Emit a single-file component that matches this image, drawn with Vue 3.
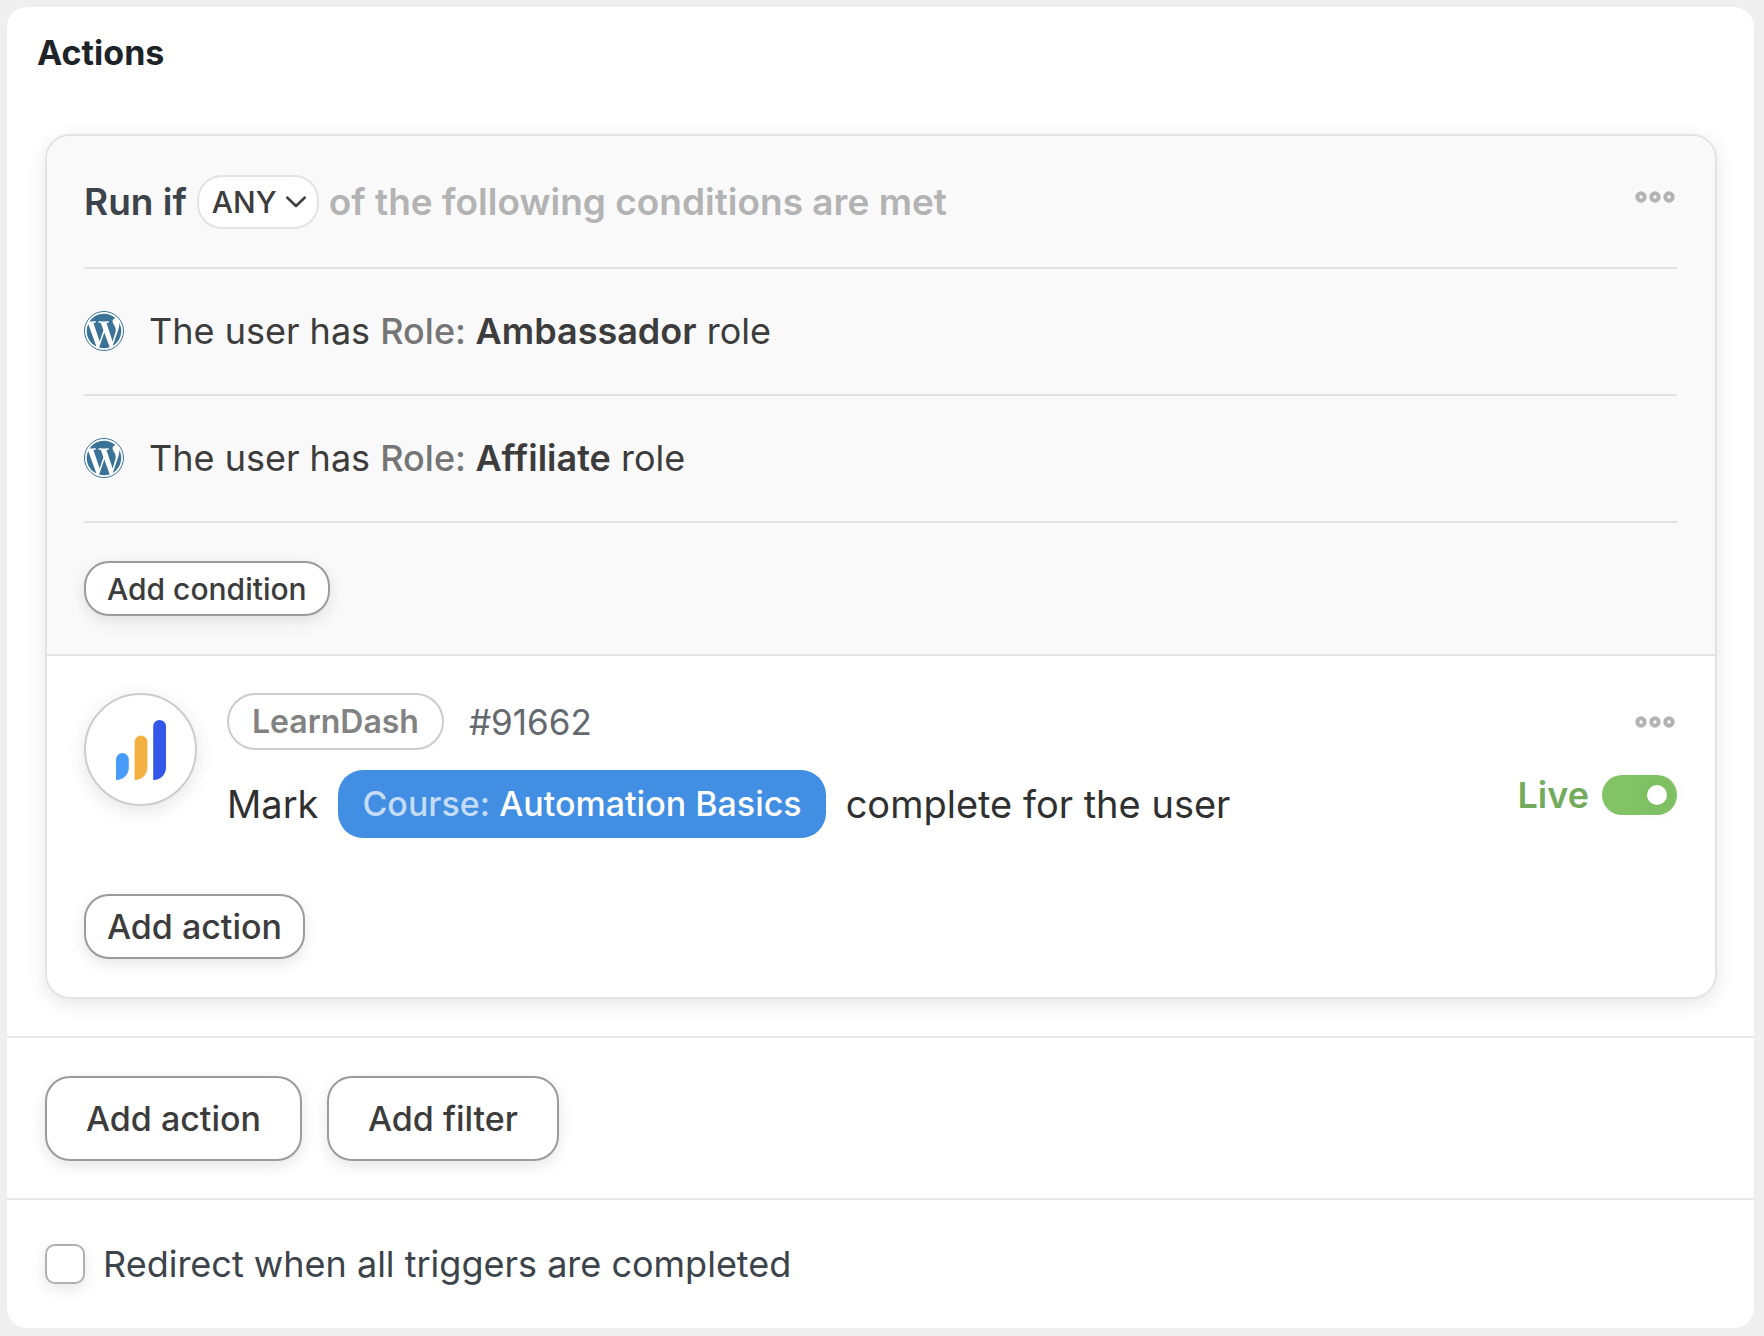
<template>
  <main class="panel">
    <h2 class="panel-title">Actions</h2>

    <section class="card">
      <!-- Conditions -->
      <div class="conditions">
        <header class="conditions-header">
          <div class="rule-text">
            <label for="match-mode" class="rule-label">Run if</label>
            <span class="select-wrapper">
              <select id="match-mode" v-model="matchMode" class="match-select">
                <option value="any">ANY</option>
                <option value="all">ALL</option>
              </select>
              <svg class="select-arrow" viewBox="0 0 20 12" width="20" height="12" fill="none" stroke="currentColor" stroke-width="2.6" stroke-linecap="round" stroke-linejoin="round"><path d="m1.3 1.6 8.7 8.4 8.7-8.4"/></svg>
            </span>
            <span class="rule-hint">of the following conditions are met</span>
          </div>
          <button type="button" class="more-btn" aria-label="Condition options">
            <svg viewBox="0 0 40 12" width="40" height="12" fill="none" stroke="currentColor" stroke-width="4"><circle cx="6" cy="6" r="3.7"/><circle cx="20" cy="6" r="3.7"/><circle cx="34" cy="6" r="3.7"/></svg>
          </button>
        </header>

        <ul class="condition-list">
          <li v-for="role in roles" :key="role" class="condition-row">
            <svg class="wp-icon" viewBox="0 0 24 24" width="40" height="40" aria-hidden="true">
              <circle cx="12" cy="12" r="11.7" fill="#fff" stroke="#3b7297" stroke-width="0.6"/>
              <path transform="translate(12 12) scale(0.96) translate(-12 -12)" fill="#3b7297" d="M21.469 6.825c.84 1.537 1.318 3.3 1.318 5.175 0 3.979-2.156 7.456-5.363 9.325l3.295-9.527c.615-1.54.82-2.771.82-3.864 0-.405-.026-.78-.07-1.11m-7.981.105c.647-.03 1.232-.105 1.232-.105.582-.075.514-.93-.067-.899 0 0-1.755.135-2.88.135-1.064 0-2.85-.15-2.85-.15-.585-.03-.661.855-.075.885 0 0 .54.061 1.125.09l1.68 4.605-2.37 7.08L5.354 6.9c.649-.03 1.234-.1 1.234-.1.585-.075.516-.93-.065-.896 0 0-1.746.138-2.874.138-.2 0-.438-.008-.69-.015C4.911 3.15 8.235 1.215 12 1.215c2.809 0 5.365 1.072 7.286 2.833-.046-.003-.091-.009-.141-.009-1.06 0-1.812.923-1.812 1.914 0 .89.513 1.643 1.06 2.531.411.72.89 1.643.89 2.977 0 .915-.354 1.994-.821 3.479l-1.075 3.585-3.9-11.61.001.014zM12 22.784c-1.059 0-2.081-.153-3.048-.437l3.237-9.406 3.315 9.087c.024.053.05.101.078.149-1.12.393-2.325.609-3.582.609M1.211 12c0-1.564.336-3.05.935-4.39L7.29 21.709C3.694 19.96 1.212 16.271 1.211 12"/>
            </svg>
            <p class="condition-text">
              The user has <span class="field-name">Role: </span><strong>{{ role }}</strong> role
            </p>
          </li>
        </ul>

        <div class="conditions-footer">
          <button type="button" class="btn btn-small">Add condition</button>
        </div>
      </div>

      <!-- Action -->
      <div class="action">
        <div class="action-row">
          <div class="avatar">
            <svg viewBox="0 0 50 60" width="50" height="60" aria-hidden="true">
              <path fill="#479bf9" d="M0 60V39.5a6.4 6.4 0 0 1 12.8 0V47.5A12.5 12.5 0 0 1 0 60z"/>
              <path fill="#f4b140" d="M18.6 60V22a6.4 6.4 0 0 1 12.8 0V47.5A12.5 12.5 0 0 1 18.6 60z"/>
              <path fill="#3358e9" d="M37.2 60V6.4a6.4 6.4 0 0 1 12.8 0V47.5A12.5 12.5 0 0 1 37.2 60z"/>
            </svg>
          </div>

          <div class="action-body">
            <div class="action-meta">
              <span class="integration">LearnDash</span>
              <span class="action-id">#91662</span>
            </div>
            <div class="sentence">
              <span>Mark</span>
              <button type="button" class="token">
                <span class="token-name">Course: </span>Automation Basics
              </button>
              <span>complete for the user</span>
            </div>
          </div>

          <div class="action-side">
            <button type="button" class="more-btn" aria-label="Action options">
              <svg viewBox="0 0 40 12" width="40" height="12" fill="none" stroke="currentColor" stroke-width="4"><circle cx="6" cy="6" r="3.7"/><circle cx="20" cy="6" r="3.7"/><circle cx="34" cy="6" r="3.7"/></svg>
            </button>
            <div class="status">
              <label for="action-live">Live</label>
              <input id="action-live" v-model="isLive" type="checkbox" role="switch" class="toggle">
            </div>
          </div>
        </div>

        <button type="button" class="btn btn-medium">Add action</button>
      </div>
    </section>

    <div class="panel-buttons">
      <button type="button" class="btn btn-large">Add action</button>
      <button type="button" class="btn btn-large">Add filter</button>
    </div>

    <div class="redirect">
      <input id="redirect" v-model="redirect" type="checkbox" class="checkbox">
      <label for="redirect">Redirect when all triggers are completed</label>
    </div>
  </main>
</template>

<script setup>
import { ref } from 'vue'

const roles = ['Ambassador', 'Affiliate']

const matchMode = ref('any')
const isLive = ref(true)
const redirect = ref(false)
</script>

<style>
body {
  background: #efefef;
}
</style>

<style scoped>
.panel {
  margin: 7px 10px 8px 7px;
  background: #fff;
  border-radius: 20px;
  color: #3c3c3c;
  font-family: Inter, "Liberation Sans", sans-serif;
  font-size: 36px;
  line-height: 44px;
}

.panel * {
  box-sizing: border-box;
}

button,
select,
input {
  margin: 0;
  font: inherit;
  color: inherit;
  cursor: pointer;
}

.panel-title {
  margin: 0;
  padding: 24px 30px 59px;
  color: #1d2327;
  font-size: 34px;
  font-weight: 700;
}

.card {
  margin: 0 37px 37px 38px;
  border: 2px solid #e3e3e3;
  border-radius: 25px;
  box-shadow: 0 5px 20px rgba(0, 0, 0, 0.1);
}

/* Conditions */
.conditions {
  padding: 0 38px 0 37px;
  background: #f9f9f9;
  border-bottom: 2px solid #e3e3e3;
  border-radius: 23px 23px 0 0;
}

.conditions-header {
  display: flex;
  align-items: flex-start;
  justify-content: space-between;
  padding: 39px 0 38px;
  border-bottom: 2px solid #e3e3e3;
}

.conditions-header .more-btn {
  margin-top: 16px;
}

.rule-text {
  display: flex;
  align-items: center;
  gap: 10px;
  font-size: 37px;
  font-weight: 600;
}

.rule-label {
  color: #3c434a;
}

.rule-hint {
  color: #b3b3b3;
}

.select-wrapper {
  position: relative;
  display: flex;
}

.match-select {
  appearance: none;
  height: 54px;
  padding: 0 40px 0 13px;
  background: #fff;
  border: 2px solid #e3e3e3;
  border-radius: 25px;
  font-size: 30px;
  font-weight: 500;
}

.select-arrow {
  position: absolute;
  top: 21px;
  right: 13px;
  pointer-events: none;
}

.more-btn {
  display: flex;
  padding: 0 2px 0 0;
  border: 0;
  background: none;
  color: #b3b3b3;
}

.condition-list {
  margin: 0;
  padding: 0;
  list-style: none;
}

.condition-row {
  display: flex;
  align-items: center;
  gap: 25px;
  padding: 40px 0 41px;
  border-bottom: 2px solid #e3e3e3;
}

.condition-text {
  margin: 0;
}

.condition-text strong {
  font-weight: 600;
}

.field-name {
  color: #757575;
  font-weight: 500;
}

.conditions-footer {
  padding: 38px 0;
}

.conditions-footer,
.panel-buttons {
  display: flex;
}

/* Buttons */
.btn {
  background: #fff;
  border: 2px solid #9b9b9b;
  border-radius: 25px;
  box-shadow: 0 5px 15px rgba(0, 0, 0, 0.1);
  font-weight: 500;
}

.btn-small {
  height: 55px;
  padding: 0 21px;
  font-size: 30px;
}

.btn-medium {
  height: 65px;
  padding: 0 21px;
  font-size: 34px;
}

.btn-large {
  height: 85px;
  padding: 0 39px;
  font-size: 34px;
}

/* Action */
.action {
  padding: 37px 38px 38px 37px;
}

.action-row {
  display: flex;
  gap: 30px;
  margin-bottom: 56px;
}

.avatar {
  display: flex;
  align-items: center;
  justify-content: center;
  flex: none;
  width: 113px;
  height: 113px;
  border: 2px solid #ccc;
  border-radius: 50%;
  box-shadow: 0 5px 20px rgba(0, 0, 0, 0.1);
}

.action-body {
  flex: 1;
}

.action-meta {
  display: flex;
  align-items: center;
  gap: 25px;
  margin-bottom: 20px;
}

.integration {
  padding: 6px 23px 5px;
  border: 2px solid #ccc;
  border-radius: 29px;
  color: #828282;
  font-size: 32px;
  font-weight: 600;
  line-height: 42px;
}

.action-id {
  color: #646970;
  font-size: 35px;
}

.sentence {
  display: flex;
  align-items: center;
  gap: 20px;
  color: #303030;
  font-size: 38px;
}

.token {
  height: 68px;
  padding: 0 24px;
  border: 0;
  border-radius: 25px;
  background: #418ee2;
  color: #fff;
  font-size: 34px;
  font-weight: 500;
}

.token-name {
  color: #c4dcf6;
}

.action-side {
  display: flex;
  flex-direction: column;
  align-items: flex-end;
  gap: 45px;
  padding-top: 23px;
}

.status {
  display: flex;
  align-items: center;
  gap: 13px;
  color: #72ab5c;
  font-weight: 600;
}

.toggle {
  appearance: none;
  display: flex;
  align-items: center;
  width: 75px;
  height: 40px;
  padding: 0 10px;
  border-radius: 20px;
  background: #b3b3b3;
}

.toggle::before {
  content: "";
  width: 20px;
  height: 20px;
  border-radius: 50%;
  background: #fff;
  box-shadow: 0 0 30px rgba(0, 0, 0, 0.1);
}

.toggle:checked {
  justify-content: flex-end;
  background: #82c366;
}

/* Panel footer */
.panel-buttons {
  gap: 25px;
  padding: 38px 38px 37px;
  border-top: 2px solid #e8e8e8;
}

.redirect {
  display: flex;
  align-items: center;
  gap: 18px;
  padding: 42px 38px;
  border-top: 2px solid #e8e8e8;
  color: #3c434a;
}

.checkbox {
  appearance: none;
  display: flex;
  align-items: center;
  justify-content: center;
  width: 40px;
  height: 40px;
  background: #fff;
  border: 2px solid #b0b0b0;
  border-radius: 10px;
  box-shadow: 0 5px 15px rgba(0, 0, 0, 0.1);
}

.checkbox:checked::before {
  content: "✓";
}
</style>
